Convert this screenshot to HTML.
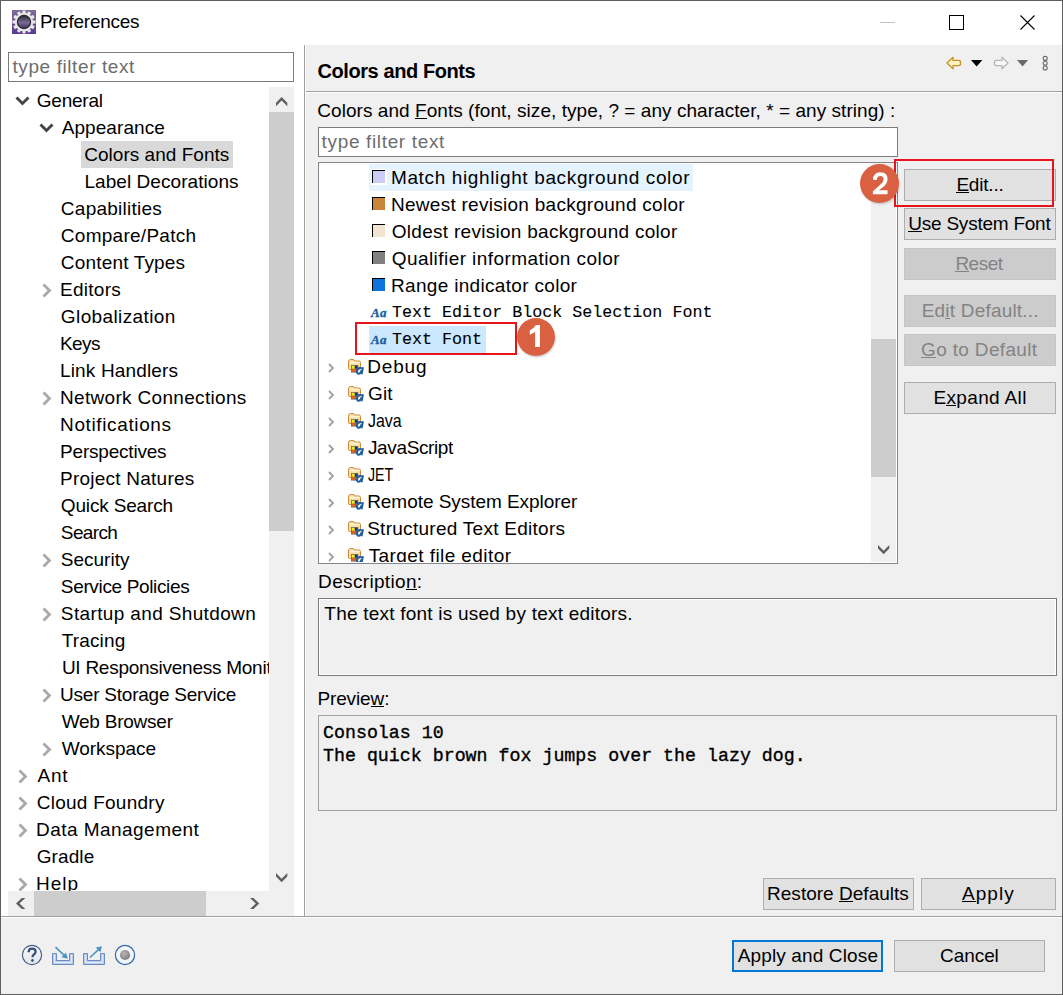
<!DOCTYPE html><html><head><meta charset="utf-8"><style>
*{margin:0;padding:0;box-sizing:border-box}
html,body{width:1063px;height:995px;overflow:hidden;background:#f0f0f0}
body{font-family:"Liberation Sans",sans-serif;font-size:18px;color:#000;position:relative}
.a{position:absolute;white-space:nowrap}
.btn{position:absolute;height:32px;background:#e1e1e1;border:1px solid #adadad}
.dis{background:#cccccc;border-color:#c4c4c4}
.g{color:#838383}
u{text-decoration:none;background:linear-gradient(currentColor,currentColor) no-repeat 0 18px/100% 1px}
.mono{font-family:"Liberation Mono",monospace}
svg{position:absolute;overflow:visible}
</style></head><body>
<div class="a" style="left:0;top:0;width:1063px;height:995px;border:1px solid #5f5f5f"></div>
<div class="a" style="left:1px;top:1px;width:1061px;height:44px;background:#fff"></div>
<svg style="left:12px;top:10px" width="24" height="24" viewBox="0 0 24 24">
<defs><linearGradient id="pg" x1="0" y1="0" x2="0" y2="1"><stop offset="0" stop-color="#7c6c9a"/><stop offset="1" stop-color="#5c3a94"/></linearGradient>
<linearGradient id="pc" x1="0" y1="0" x2="0" y2="1"><stop offset="0" stop-color="#2a2838"/><stop offset="0.55" stop-color="#7a6a98"/><stop offset="1" stop-color="#3a2c5a"/></linearGradient></defs>
<rect x="0" y="0" width="24" height="24" fill="url(#pg)"/>
<g fill="#e6e6e6" transform="translate(12 12)"><circle r="9.2"/><rect x="-1.6" y="-11.5" width="3.2" height="4" transform="rotate(0)"/><rect x="-1.6" y="-11.5" width="3.2" height="4" transform="rotate(30)"/><rect x="-1.6" y="-11.5" width="3.2" height="4" transform="rotate(60)"/><rect x="-1.6" y="-11.5" width="3.2" height="4" transform="rotate(90)"/><rect x="-1.6" y="-11.5" width="3.2" height="4" transform="rotate(120)"/><rect x="-1.6" y="-11.5" width="3.2" height="4" transform="rotate(150)"/><rect x="-1.6" y="-11.5" width="3.2" height="4" transform="rotate(180)"/><rect x="-1.6" y="-11.5" width="3.2" height="4" transform="rotate(210)"/><rect x="-1.6" y="-11.5" width="3.2" height="4" transform="rotate(240)"/><rect x="-1.6" y="-11.5" width="3.2" height="4" transform="rotate(270)"/><rect x="-1.6" y="-11.5" width="3.2" height="4" transform="rotate(300)"/><rect x="-1.6" y="-11.5" width="3.2" height="4" transform="rotate(330)"/></g>
<circle cx="12" cy="12" r="6.6" fill="url(#pc)" stroke="#262626" stroke-width="1.2"/></svg>
<div class="a" style="left:39.90px;top:8px;line-height:27px;letter-spacing:-0.290px;font-size:19px;">Preferences</div>
<div class="a" style="left:880px;top:22px;width:15px;height:1px;background:#c4c4c4"></div>
<div class="a" style="left:949px;top:15px;width:15px;height:15px;border:1px solid #000"></div>
<svg style="left:1020px;top:15px" width="15" height="15"><path d="M0.5 0.5L14.5 14.5M14.5 0.5L0.5 14.5" stroke="#000" stroke-width="1.1"/></svg>
<div class="a" style="left:1px;top:45px;width:303px;height:871px;background:#fff"></div>
<div class="a" style="left:8px;top:52px;width:286px;height:30px;border:1px solid #7a7a7a;background:#fff"></div>
<div class="a" style="left:12.50px;top:53px;line-height:28px;letter-spacing:0.587px;font-size:19px;color:#6d6d6d">type filter text</div>
<div class="a" style="left:0px;top:87px;width:269px;height:804px;overflow:hidden">
<svg style="left:15px;top:9px" width="15" height="10"><path d="M1.5 1.5L7.5 7.5L13.5 1.5" fill="none" stroke="#454545" stroke-width="2.85"/></svg>
<div class="a" style="left:36.76px;top:0px;line-height:27px;letter-spacing:-0.230px;font-size:19px;">General</div>
<svg style="left:39px;top:36px" width="15" height="10"><path d="M1.5 1.5L7.5 7.5L13.5 1.5" fill="none" stroke="#454545" stroke-width="2.85"/></svg>
<div class="a" style="left:61.66px;top:27px;line-height:27px;letter-spacing:0.076px;font-size:19px;">Appearance</div>
<div class="a" style="left:81px;top:54px;width:152px;height:27px;background:#d9d9d9"></div>
<div class="a" style="left:84.30px;top:54px;line-height:27px;letter-spacing:0.019px;font-size:19px;">Colors and Fonts</div>
<div class="a" style="left:84.40px;top:81px;line-height:27px;letter-spacing:0.066px;font-size:19px;">Label Decorations</div>
<div class="a" style="left:60.86px;top:108px;line-height:27px;letter-spacing:0.245px;font-size:19px;">Capabilities</div>
<div class="a" style="left:60.86px;top:135px;line-height:27px;letter-spacing:0.263px;font-size:19px;">Compare/Patch</div>
<div class="a" style="left:60.86px;top:162px;line-height:27px;letter-spacing:0.170px;font-size:19px;">Content Types</div>
<svg style="left:41.5px;top:196px" width="10" height="15"><path d="M1.5 1.5L7.5 7.5L1.5 13.5" fill="none" stroke="#a8a8a8" stroke-width="2.8"/></svg>
<div class="a" style="left:60.06px;top:189px;line-height:27px;letter-spacing:0.270px;font-size:19px;">Editors</div>
<div class="a" style="left:60.86px;top:216px;line-height:27px;letter-spacing:0.385px;font-size:19px;">Globalization</div>
<div class="a" style="left:60.06px;top:243px;line-height:27px;letter-spacing:-0.607px;font-size:19px;">Keys</div>
<div class="a" style="left:60.06px;top:270px;line-height:27px;letter-spacing:0.143px;font-size:19px;">Link Handlers</div>
<svg style="left:41.5px;top:304px" width="10" height="15"><path d="M1.5 1.5L7.5 7.5L1.5 13.5" fill="none" stroke="#a8a8a8" stroke-width="2.8"/></svg>
<div class="a" style="left:60.06px;top:297px;line-height:27px;letter-spacing:0.313px;font-size:19px;">Network Connections</div>
<div class="a" style="left:60.06px;top:324px;line-height:27px;letter-spacing:0.625px;font-size:19px;">Notifications</div>
<div class="a" style="left:60.06px;top:351px;line-height:27px;letter-spacing:-0.205px;font-size:19px;">Perspectives</div>
<div class="a" style="left:60.06px;top:378px;line-height:27px;letter-spacing:0.236px;font-size:19px;">Project Natures</div>
<div class="a" style="left:60.86px;top:405px;line-height:27px;letter-spacing:-0.167px;font-size:19px;">Quick Search</div>
<div class="a" style="left:60.86px;top:432px;line-height:27px;letter-spacing:-0.636px;font-size:19px;">Search</div>
<svg style="left:41.5px;top:466px" width="10" height="15"><path d="M1.5 1.5L7.5 7.5L1.5 13.5" fill="none" stroke="#a8a8a8" stroke-width="2.8"/></svg>
<div class="a" style="left:60.86px;top:459px;line-height:27px;letter-spacing:-0.011px;font-size:19px;">Security</div>
<div class="a" style="left:60.86px;top:486px;line-height:27px;letter-spacing:-0.353px;font-size:19px;">Service Policies</div>
<svg style="left:41.5px;top:520px" width="10" height="15"><path d="M1.5 1.5L7.5 7.5L1.5 13.5" fill="none" stroke="#a8a8a8" stroke-width="2.8"/></svg>
<div class="a" style="left:60.86px;top:513px;line-height:27px;letter-spacing:0.360px;font-size:19px;">Startup and Shutdown</div>
<div class="a" style="left:61.66px;top:540px;line-height:27px;letter-spacing:0.157px;font-size:19px;">Tracing</div>
<div class="a" style="left:61.90px;top:567px;line-height:27px;letter-spacing:-0.257px;font-size:19px;">UI Responsiveness Monitoring</div>
<svg style="left:41.5px;top:601px" width="10" height="15"><path d="M1.5 1.5L7.5 7.5L1.5 13.5" fill="none" stroke="#a8a8a8" stroke-width="2.8"/></svg>
<div class="a" style="left:60.06px;top:594px;line-height:27px;letter-spacing:-0.229px;font-size:19px;">User Storage Service</div>
<div class="a" style="left:61.66px;top:621px;line-height:27px;letter-spacing:-0.232px;font-size:19px;">Web Browser</div>
<svg style="left:41.5px;top:655px" width="10" height="15"><path d="M1.5 1.5L7.5 7.5L1.5 13.5" fill="none" stroke="#a8a8a8" stroke-width="2.8"/></svg>
<div class="a" style="left:61.66px;top:648px;line-height:27px;letter-spacing:-0.023px;font-size:19px;">Workspace</div>
<svg style="left:17.5px;top:682px" width="10" height="15"><path d="M1.5 1.5L7.5 7.5L1.5 13.5" fill="none" stroke="#a8a8a8" stroke-width="2.8"/></svg>
<div class="a" style="left:37.56px;top:675px;line-height:27px;letter-spacing:0.730px;font-size:19px;">Ant</div>
<svg style="left:17.5px;top:709px" width="10" height="15"><path d="M1.5 1.5L7.5 7.5L1.5 13.5" fill="none" stroke="#a8a8a8" stroke-width="2.8"/></svg>
<div class="a" style="left:36.76px;top:702px;line-height:27px;letter-spacing:0.252px;font-size:19px;">Cloud Foundry</div>
<svg style="left:17.5px;top:736px" width="10" height="15"><path d="M1.5 1.5L7.5 7.5L1.5 13.5" fill="none" stroke="#a8a8a8" stroke-width="2.8"/></svg>
<div class="a" style="left:35.96px;top:729px;line-height:27px;letter-spacing:0.464px;font-size:19px;">Data Management</div>
<div class="a" style="left:36.76px;top:756px;line-height:27px;letter-spacing:0.096px;font-size:19px;">Gradle</div>
<svg style="left:17.5px;top:790px" width="10" height="15"><path d="M1.5 1.5L7.5 7.5L1.5 13.5" fill="none" stroke="#a8a8a8" stroke-width="2.8"/></svg>
<div class="a" style="left:35.96px;top:783px;line-height:27px;letter-spacing:1.020px;font-size:19px;">Help</div>
<svg style="left:17.5px;top:817px" width="10" height="15"><path d="M1.5 1.5L7.5 7.5L1.5 13.5" fill="none" stroke="#a8a8a8" stroke-width="2.8"/></svg>
</div>
<div class="a" style="left:269px;top:87px;width:25px;height:804px;background:#f0f0f0"></div>
<div class="a" style="left:269px;top:112px;width:25px;height:419px;background:#cdcdcd"></div>
<svg style="left:275.8px;top:97px" width="12" height="10"><path d="M0 9.2L5.65 3.55L11.3 9.2V5.7L5.65 0L0 5.7Z" fill="#606060"/></svg>
<svg style="left:275.8px;top:872.8px" width="12" height="10"><path d="M0 0L5.65 5.65L11.3 0V3.5L5.65 9.2L0 3.5Z" fill="#606060"/></svg>
<div class="a" style="left:269px;top:891px;width:25px;height:25px;background:#f0f0f0"></div>
<div class="a" style="left:8px;top:891px;width:261px;height:25px;background:#f0f0f0"></div>
<div class="a" style="left:34px;top:891px;width:172px;height:25px;background:#cdcdcd"></div>
<svg style="left:16.1px;top:897.8px" width="10" height="12"><path d="M9.3 0H5.8L0 5.55L5.8 11.1H9.3L3.5 5.55Z" fill="#606060"/></svg>
<svg style="left:249.7px;top:897.9px" width="10" height="12"><path d="M0 0H3.5L9.3 5.55L3.5 11.1H0L5.8 5.55Z" fill="#606060"/></svg>
<div class="a" style="left:304px;top:45px;width:1px;height:871px;background:#a0a0a0"></div>
<div class="a" style="left:305px;top:45px;width:1px;height:871px;background:#fff"></div>
<div class="a" style="left:306px;top:91px;width:756px;height:1px;background:#a0a0a0"></div>
<div class="a" style="left:306px;top:92px;width:756px;height:1px;background:#fff"></div>
<div class="a" style="left:317.42px;top:58px;line-height:27px;letter-spacing:-0.412px;font-size:20px;font-weight:bold;">Colors and Fonts</div>
<svg style="left:946px;top:56px" width="16" height="14" viewBox="0 0 16 14"><path d="M1 7L7 1.2V4.4H12.8Q14.6 4.4 14.6 7Q14.6 9.6 12.8 9.6H7V12.8Z" fill="#fff2c4" stroke="#c8921e" stroke-width="1.3" stroke-linejoin="round"/></svg>
<svg style="left:971px;top:60px" width="11" height="7"><path d="M0 0H11.3L5.65 6.4Z" fill="#000"/></svg>
<svg style="left:992.5px;top:56px" width="16" height="14" viewBox="0 0 16 14"><path d="M15 7L9 1.2V4.4H3.2Q1.4 4.4 1.4 7Q1.4 9.6 3.2 9.6H9V12.8Z" fill="#f9f9f9" stroke="#b4b4b4" stroke-width="1.2" stroke-linejoin="round"/></svg>
<svg style="left:1017px;top:60px" width="11" height="7"><path d="M0 0H11.1L5.55 6.4Z" fill="#6a6a6a"/></svg>
<svg style="left:1042px;top:55px" width="7" height="17"><circle cx="3.2" cy="3.4" r="2" fill="none" stroke="#6a6a6a" stroke-width="1.1"/><circle cx="3.2" cy="8.2" r="2" fill="none" stroke="#6a6a6a" stroke-width="1.1"/><circle cx="3.2" cy="13" r="2" fill="none" stroke="#6a6a6a" stroke-width="1.1"/></svg>
<div class="a" style="left:317.30px;top:97px;line-height:27px;letter-spacing:0.049px;font-size:19px;">Colors and <u>F</u>onts (font, size, type, ? = any character, * = any string) :</div>
<div class="a" style="left:318px;top:127px;width:580px;height:30px;border:1px solid #7a7a7a;background:#fff"></div>
<div class="a" style="left:321.60px;top:128px;line-height:28px;letter-spacing:0.651px;font-size:19px;color:#6d6d6d">type filter text</div>
<div class="a" style="left:318px;top:162px;width:580px;height:402px;border:1px solid #828790;background:#fff"></div>
<div class="a" style="left:319px;top:163px;width:552px;height:399px;overflow:hidden">
<div class="a" style="left:50px;top:1px;width:324px;height:27px;background:#e5f3ff;"></div>
<div class="a" style="left:50px;top:163px;width:117px;height:27px;background:#cce8ff;"></div>
<div class="a" style="left:52px;top:6px;width:16px;height:16px;background:#fff;"></div>
<div class="a" style="left:53px;top:7px;width:13px;height:13px;background:#ccccf5;border-top:1px solid #000;border-left:1px solid #000"></div>
<div class="a" style="left:71.96px;top:1px;line-height:27px;letter-spacing:0.636px;font-size:19px;">Match highlight background color</div>
<div class="a" style="left:52px;top:33px;width:16px;height:16px;background:#fff;"></div>
<div class="a" style="left:53px;top:34px;width:13px;height:13px;background:#c9853a;border-top:1px solid #000;border-left:1px solid #000"></div>
<div class="a" style="left:71.96px;top:28px;line-height:27px;letter-spacing:0.275px;font-size:19px;">Newest revision background color</div>
<div class="a" style="left:52px;top:60px;width:16px;height:16px;background:#fff;"></div>
<div class="a" style="left:53px;top:61px;width:13px;height:13px;background:#f2e3d3;border-top:1px solid #000;border-left:1px solid #000"></div>
<div class="a" style="left:72.76px;top:55px;line-height:27px;letter-spacing:0.284px;font-size:19px;">Oldest revision background color</div>
<div class="a" style="left:52px;top:87px;width:16px;height:16px;background:#fff;"></div>
<div class="a" style="left:53px;top:88px;width:13px;height:13px;background:#808080;border-top:1px solid #000;border-left:1px solid #000"></div>
<div class="a" style="left:72.76px;top:82px;line-height:27px;letter-spacing:0.433px;font-size:19px;">Qualifier information color</div>
<div class="a" style="left:52px;top:114px;width:16px;height:16px;background:#fff;"></div>
<div class="a" style="left:53px;top:115px;width:13px;height:13px;background:#0a74dc;border-top:1px solid #000;border-left:1px solid #000"></div>
<div class="a" style="left:71.96px;top:109px;line-height:27px;letter-spacing:0.320px;font-size:19px;">Range indicator color</div>
<div class="a" style="left:52px;top:143px;font-family:'Liberation Serif',serif;font-style:italic;font-weight:bold;font-size:13px;color:#215c9c;line-height:14px;letter-spacing:0.3px;-webkit-text-stroke:0.35px #215c9c">Aa</div>
<div class="a mono" style="left:73px;top:136px;font-size:16.7px;line-height:27px;-webkit-text-stroke:0.1px #000">Text&nbsp;Editor&nbsp;Block&nbsp;Selection&nbsp;Font</div>
<div class="a" style="left:52px;top:170px;font-family:'Liberation Serif',serif;font-style:italic;font-weight:bold;font-size:13px;color:#215c9c;line-height:14px;letter-spacing:0.3px;-webkit-text-stroke:0.35px #215c9c">Aa</div>
<div class="a mono" style="left:73px;top:163px;font-size:16.7px;line-height:27px;-webkit-text-stroke:0.1px #000">Text&nbsp;Font</div>
<svg style="left:9px;top:199.5px" width="8" height="10"><path d="M1 1L5 5L1 9" fill="none" stroke="#a0a0a0" stroke-width="1.8"/></svg>
<svg style="left:29px;top:195px" width="16" height="17" viewBox="0 0 16 17">
<path d="M0.5 4Q0.5 1.5 2.5 1.5H5Q6.2 1.5 6.7 3H11Q12.5 3 12.5 4.5V10.5Q12.5 11.5 11.5 11.5H1.5Q0.5 11.5 0.5 10.5Z" fill="#f7dfa6" stroke="#cd8a36" stroke-width="1"/>
<path d="M1.5 4.5H11.5" stroke="#fff6dc" stroke-width="1.5"/>
<rect x="3" y="7" width="7.2" height="7.6" fill="#707070"/>
<rect x="3.8" y="7.8" width="2.9" height="2.9" fill="#f8f000"/><rect x="6.9" y="7.8" width="2.6" height="2.6" fill="#16309a"/>
<rect x="3.8" y="10.9" width="2.9" height="2.9" fill="#f0600a"/>
<path d="M13.8 10.6C13 9.5 9.8 9.3 9.1 12.6C8.6 15.1 9.7 15.9 10.7 15.8C11.9 15.7 13 14.4 13.6 12.2" fill="none" stroke="#1e5fa2" stroke-width="1.9"/><path d="M15 9.3L13.5 16.2" stroke="#1e5fa2" stroke-width="2"/>
</svg>
<div class="a" style="left:48.18px;top:190px;line-height:27px;letter-spacing:0.850px;font-size:19px;">Debug</div>
<svg style="left:9px;top:226.5px" width="8" height="10"><path d="M1 1L5 5L1 9" fill="none" stroke="#a0a0a0" stroke-width="1.8"/></svg>
<svg style="left:29px;top:222px" width="16" height="17" viewBox="0 0 16 17">
<path d="M0.5 4Q0.5 1.5 2.5 1.5H5Q6.2 1.5 6.7 3H11Q12.5 3 12.5 4.5V10.5Q12.5 11.5 11.5 11.5H1.5Q0.5 11.5 0.5 10.5Z" fill="#f7dfa6" stroke="#cd8a36" stroke-width="1"/>
<path d="M1.5 4.5H11.5" stroke="#fff6dc" stroke-width="1.5"/>
<rect x="3" y="7" width="7.2" height="7.6" fill="#707070"/>
<rect x="3.8" y="7.8" width="2.9" height="2.9" fill="#f8f000"/><rect x="6.9" y="7.8" width="2.6" height="2.6" fill="#16309a"/>
<rect x="3.8" y="10.9" width="2.9" height="2.9" fill="#f0600a"/>
<path d="M13.8 10.6C13 9.5 9.8 9.3 9.1 12.6C8.6 15.1 9.7 15.9 10.7 15.8C11.9 15.7 13 14.4 13.6 12.2" fill="none" stroke="#1e5fa2" stroke-width="1.9"/><path d="M15 9.3L13.5 16.2" stroke="#1e5fa2" stroke-width="2"/>
</svg>
<div class="a" style="left:48.98px;top:217px;line-height:27px;letter-spacing:0.190px;font-size:19px;">Git</div>
<svg style="left:9px;top:253.5px" width="8" height="10"><path d="M1 1L5 5L1 9" fill="none" stroke="#a0a0a0" stroke-width="1.8"/></svg>
<svg style="left:29px;top:249px" width="16" height="17" viewBox="0 0 16 17">
<path d="M0.5 4Q0.5 1.5 2.5 1.5H5Q6.2 1.5 6.7 3H11Q12.5 3 12.5 4.5V10.5Q12.5 11.5 11.5 11.5H1.5Q0.5 11.5 0.5 10.5Z" fill="#f7dfa6" stroke="#cd8a36" stroke-width="1"/>
<path d="M1.5 4.5H11.5" stroke="#fff6dc" stroke-width="1.5"/>
<rect x="3" y="7" width="7.2" height="7.6" fill="#707070"/>
<rect x="3.8" y="7.8" width="2.9" height="2.9" fill="#f8f000"/><rect x="6.9" y="7.8" width="2.6" height="2.6" fill="#16309a"/>
<rect x="3.8" y="10.9" width="2.9" height="2.9" fill="#f0600a"/>
<path d="M13.8 10.6C13 9.5 9.8 9.3 9.1 12.6C8.6 15.1 9.7 15.9 10.7 15.8C11.9 15.7 13 14.4 13.6 12.2" fill="none" stroke="#1e5fa2" stroke-width="1.9"/><path d="M15 9.3L13.5 16.2" stroke="#1e5fa2" stroke-width="2"/>
</svg>
<div class="a" style="left:49.20px;top:244px;line-height:27px;font-size:19px;transform:scaleX(0.8390);transform-origin:0 0">Java</div>
<svg style="left:9px;top:280.5px" width="8" height="10"><path d="M1 1L5 5L1 9" fill="none" stroke="#a0a0a0" stroke-width="1.8"/></svg>
<svg style="left:29px;top:276px" width="16" height="17" viewBox="0 0 16 17">
<path d="M0.5 4Q0.5 1.5 2.5 1.5H5Q6.2 1.5 6.7 3H11Q12.5 3 12.5 4.5V10.5Q12.5 11.5 11.5 11.5H1.5Q0.5 11.5 0.5 10.5Z" fill="#f7dfa6" stroke="#cd8a36" stroke-width="1"/>
<path d="M1.5 4.5H11.5" stroke="#fff6dc" stroke-width="1.5"/>
<rect x="3" y="7" width="7.2" height="7.6" fill="#707070"/>
<rect x="3.8" y="7.8" width="2.9" height="2.9" fill="#f8f000"/><rect x="6.9" y="7.8" width="2.6" height="2.6" fill="#16309a"/>
<rect x="3.8" y="10.9" width="2.9" height="2.9" fill="#f0600a"/>
<path d="M13.8 10.6C13 9.5 9.8 9.3 9.1 12.6C8.6 15.1 9.7 15.9 10.7 15.8C11.9 15.7 13 14.4 13.6 12.2" fill="none" stroke="#1e5fa2" stroke-width="1.9"/><path d="M15 9.3L13.5 16.2" stroke="#1e5fa2" stroke-width="2"/>
</svg>
<div class="a" style="left:48.98px;top:271px;line-height:27px;letter-spacing:-0.369px;font-size:19px;">JavaScript</div>
<svg style="left:9px;top:307.5px" width="8" height="10"><path d="M1 1L5 5L1 9" fill="none" stroke="#a0a0a0" stroke-width="1.8"/></svg>
<svg style="left:29px;top:303px" width="16" height="17" viewBox="0 0 16 17">
<path d="M0.5 4Q0.5 1.5 2.5 1.5H5Q6.2 1.5 6.7 3H11Q12.5 3 12.5 4.5V10.5Q12.5 11.5 11.5 11.5H1.5Q0.5 11.5 0.5 10.5Z" fill="#f7dfa6" stroke="#cd8a36" stroke-width="1"/>
<path d="M1.5 4.5H11.5" stroke="#fff6dc" stroke-width="1.5"/>
<rect x="3" y="7" width="7.2" height="7.6" fill="#707070"/>
<rect x="3.8" y="7.8" width="2.9" height="2.9" fill="#f8f000"/><rect x="6.9" y="7.8" width="2.6" height="2.6" fill="#16309a"/>
<rect x="3.8" y="10.9" width="2.9" height="2.9" fill="#f0600a"/>
<path d="M13.8 10.6C13 9.5 9.8 9.3 9.1 12.6C8.6 15.1 9.7 15.9 10.7 15.8C11.9 15.7 13 14.4 13.6 12.2" fill="none" stroke="#1e5fa2" stroke-width="1.9"/><path d="M15 9.3L13.5 16.2" stroke="#1e5fa2" stroke-width="2"/>
</svg>
<div class="a" style="left:49.20px;top:298px;line-height:27px;font-size:19px;transform:scaleX(0.7471);transform-origin:0 0">JET</div>
<svg style="left:9px;top:334.5px" width="8" height="10"><path d="M1 1L5 5L1 9" fill="none" stroke="#a0a0a0" stroke-width="1.8"/></svg>
<svg style="left:29px;top:330px" width="16" height="17" viewBox="0 0 16 17">
<path d="M0.5 4Q0.5 1.5 2.5 1.5H5Q6.2 1.5 6.7 3H11Q12.5 3 12.5 4.5V10.5Q12.5 11.5 11.5 11.5H1.5Q0.5 11.5 0.5 10.5Z" fill="#f7dfa6" stroke="#cd8a36" stroke-width="1"/>
<path d="M1.5 4.5H11.5" stroke="#fff6dc" stroke-width="1.5"/>
<rect x="3" y="7" width="7.2" height="7.6" fill="#707070"/>
<rect x="3.8" y="7.8" width="2.9" height="2.9" fill="#f8f000"/><rect x="6.9" y="7.8" width="2.6" height="2.6" fill="#16309a"/>
<rect x="3.8" y="10.9" width="2.9" height="2.9" fill="#f0600a"/>
<path d="M13.8 10.6C13 9.5 9.8 9.3 9.1 12.6C8.6 15.1 9.7 15.9 10.7 15.8C11.9 15.7 13 14.4 13.6 12.2" fill="none" stroke="#1e5fa2" stroke-width="1.9"/><path d="M15 9.3L13.5 16.2" stroke="#1e5fa2" stroke-width="2"/>
</svg>
<div class="a" style="left:48.18px;top:325px;line-height:27px;letter-spacing:-0.045px;font-size:19px;">Remote System Explorer</div>
<svg style="left:9px;top:361.5px" width="8" height="10"><path d="M1 1L5 5L1 9" fill="none" stroke="#a0a0a0" stroke-width="1.8"/></svg>
<svg style="left:29px;top:357px" width="16" height="17" viewBox="0 0 16 17">
<path d="M0.5 4Q0.5 1.5 2.5 1.5H5Q6.2 1.5 6.7 3H11Q12.5 3 12.5 4.5V10.5Q12.5 11.5 11.5 11.5H1.5Q0.5 11.5 0.5 10.5Z" fill="#f7dfa6" stroke="#cd8a36" stroke-width="1"/>
<path d="M1.5 4.5H11.5" stroke="#fff6dc" stroke-width="1.5"/>
<rect x="3" y="7" width="7.2" height="7.6" fill="#707070"/>
<rect x="3.8" y="7.8" width="2.9" height="2.9" fill="#f8f000"/><rect x="6.9" y="7.8" width="2.6" height="2.6" fill="#16309a"/>
<rect x="3.8" y="10.9" width="2.9" height="2.9" fill="#f0600a"/>
<path d="M13.8 10.6C13 9.5 9.8 9.3 9.1 12.6C8.6 15.1 9.7 15.9 10.7 15.8C11.9 15.7 13 14.4 13.6 12.2" fill="none" stroke="#1e5fa2" stroke-width="1.9"/><path d="M15 9.3L13.5 16.2" stroke="#1e5fa2" stroke-width="2"/>
</svg>
<div class="a" style="left:48.18px;top:352px;line-height:27px;letter-spacing:0.275px;font-size:19px;">Structured Text Editors</div>
<svg style="left:9px;top:388.5px" width="8" height="10"><path d="M1 1L5 5L1 9" fill="none" stroke="#a0a0a0" stroke-width="1.8"/></svg>
<svg style="left:29px;top:384px" width="16" height="17" viewBox="0 0 16 17">
<path d="M0.5 4Q0.5 1.5 2.5 1.5H5Q6.2 1.5 6.7 3H11Q12.5 3 12.5 4.5V10.5Q12.5 11.5 11.5 11.5H1.5Q0.5 11.5 0.5 10.5Z" fill="#f7dfa6" stroke="#cd8a36" stroke-width="1"/>
<path d="M1.5 4.5H11.5" stroke="#fff6dc" stroke-width="1.5"/>
<rect x="3" y="7" width="7.2" height="7.6" fill="#707070"/>
<rect x="3.8" y="7.8" width="2.9" height="2.9" fill="#f8f000"/><rect x="6.9" y="7.8" width="2.6" height="2.6" fill="#16309a"/>
<rect x="3.8" y="10.9" width="2.9" height="2.9" fill="#f0600a"/>
<path d="M13.8 10.6C13 9.5 9.8 9.3 9.1 12.6C8.6 15.1 9.7 15.9 10.7 15.8C11.9 15.7 13 14.4 13.6 12.2" fill="none" stroke="#1e5fa2" stroke-width="1.9"/><path d="M15 9.3L13.5 16.2" stroke="#1e5fa2" stroke-width="2"/>
</svg>
<div class="a" style="left:49.70px;top:379px;line-height:27px;letter-spacing:0.418px;font-size:19px;">Target file editor</div>
</div>
<div class="a" style="left:871px;top:163px;width:25px;height:399px;background:#f0f0f0"></div>
<div class="a" style="left:871px;top:339px;width:25px;height:138px;background:#cdcdcd"></div>
<svg style="left:877.9px;top:544.7px" width="12" height="10"><path d="M0 0L5.65 5.65L11.3 0V3.5L5.65 9.2L0 3.5Z" fill="#606060"/></svg>
<div class="a" style="left:355px;top:322px;width:162px;height:33px;border:2px solid #e8141c"></div>
<div class="a" style="left:516.95px;top:317.85px;width:38.3px;height:38.3px;border-radius:50%;background:#d96141;box-shadow:0.8px 1.6px 1.6px rgba(0,0,0,0.16)"></div>
<svg style="left:536.1px;top:337px" width="1" height="1"><path d="M0 -12H3.9V10H-0.9V-5.1L-6.2 -2.2V-6.4Q-2.5 -8.2 0 -12Z" fill="#fff"/></svg>
<div class="btn" style="left:904px;top:169px;width:152px;"></div>
<div class="a" style="left:956.40px;top:171px;line-height:27px;letter-spacing:-0.207px;font-size:19px;"><u>E</u>dit...</div>
<div class="btn" style="left:904px;top:208px;width:152px;"></div>
<div class="a" style="left:908.30px;top:210px;line-height:27px;letter-spacing:-0.236px;font-size:19px;"><u>U</u>se System Font</div>
<div class="btn dis" style="left:904px;top:248px;width:152px;"></div>
<div class="a" style="left:955.40px;top:250px;line-height:27px;letter-spacing:-0.510px;font-size:19px;color:#838383;"><u>R</u>eset</div>
<div class="btn dis" style="left:904px;top:295px;width:152px;"></div>
<div class="a" style="left:921.72px;top:297px;line-height:27px;letter-spacing:0.199px;font-size:19px;color:#838383;">Ed<u>i</u>t Default...</div>
<div class="btn dis" style="left:904px;top:334px;width:152px;"></div>
<div class="a" style="left:921.08px;top:336px;line-height:27px;letter-spacing:0.335px;font-size:19px;color:#838383;"><u>G</u>o to Default</div>
<div class="btn" style="left:904px;top:382px;width:152px;"></div>
<div class="a" style="left:933.40px;top:384px;line-height:27px;letter-spacing:0.356px;font-size:19px;">E<u>x</u>pand All</div>
<div class="a" style="left:894px;top:159px;width:160px;height:48px;border:2px solid #e8141c"></div>
<div class="a" style="left:860.35px;top:164.45px;width:39px;height:39px;border-radius:50%;background:#d96141;box-shadow:0.8px 1.6px 1.6px rgba(0,0,0,0.16)"></div>
<svg style="left:879.85px;top:183.95px" width="1" height="1"><path d="M-7.1 -4.2Q-6.8 -11.8 0.4 -11.8Q7.55 -11.8 7.55 -5Q7.55 -1 3.5 2.8L-1.2 6.2H7.55V10.2H-7.1V7.2L0.8 0.3Q3.6 -2.3 3.6 -4.9Q3.6 -7.9 0.4 -7.9Q-3.1 -7.9 -3.2 -3.9Z" fill="#fff"/></svg>
<div class="a" style="left:318.08px;top:568px;line-height:27px;letter-spacing:0.338px;font-size:19px;">Descriptio<u>n</u>:</div>
<div class="a" style="left:318px;top:598px;width:739px;height:78px;border:1px solid #7a7a7a;box-shadow:inset 1px 1px 0 #fff,inset -1px -1px 0 #fff;background:#f0f0f0"></div>
<div class="a" style="left:324.32px;top:600px;line-height:27px;letter-spacing:0.224px;font-size:19px;">The text font is used by text editors.</div>
<div class="a" style="left:317.40px;top:685px;line-height:27px;letter-spacing:-0.114px;font-size:19px;">Previe<u>w</u>:</div>
<div class="a" style="left:318px;top:715px;width:739px;height:96px;border:1px solid #a0a0a0;background:#f0f0f0"></div>
<div class="a mono" style="left:323px;top:721.5px;line-height:23px;font-size:18.3px;white-space:pre;-webkit-text-stroke:0.35px #000">Consolas 10
The quick brown fox jumps over the lazy dog.</div>
<div class="btn" style="left:763px;top:878px;width:151px;"></div>
<div class="a" style="left:767.06px;top:880px;line-height:27px;letter-spacing:0.017px;font-size:19px;">Restore <u>D</u>efaults</div>
<div class="btn" style="left:921px;top:878px;width:135px;"></div>
<div class="a" style="left:962.06px;top:880px;line-height:27px;letter-spacing:1.030px;font-size:19px;"><u>A</u>pply</div>
<div class="a" style="left:1px;top:916px;width:1061px;height:1px;background:#a0a0a0"></div>
<div class="a" style="left:1px;top:917px;width:1061px;height:1px;background:#fff"></div>
<svg style="left:21px;top:944px" width="22" height="22" viewBox="0 0 22 22"><defs><linearGradient id="hg" x1="0" y1="0" x2="0" y2="1"><stop offset="0" stop-color="#fafafa"/><stop offset="1" stop-color="#e2e4ea"/></linearGradient></defs><circle cx="11" cy="11" r="9.6" fill="url(#hg)" stroke="#3e5a86" stroke-width="1.1"/><path d="M7.6 8.2Q7.6 4.6 11.1 4.6Q14.6 4.6 14.6 7.7Q14.6 9.6 12.6 10.7Q11.6 11.3 11.6 13.2" fill="none" stroke="#34507e" stroke-width="2.3"/><circle cx="11.5" cy="16.4" r="1.35" fill="#34507e"/></svg>
<svg style="left:51.5px;top:946px" width="23" height="20" viewBox="0 0 23 20"><path d="M0.5 7.5V18.5H21.5V7.5H17.5V14.5H4.5V7.5Z" fill="#b9cbe8" stroke="#6a8cc4" stroke-width="1"/><path d="M2.5 9V16.5H19.5V9" fill="none" stroke="#e8eef8" stroke-width="1"/><path d="M3.5 1.2L13.5 10.6" stroke="#4a94c8" stroke-width="1.6"/><path d="M15.8 12.8L9.4 11.2L14 6.6Z" fill="#4a94c8"/></svg>
<svg style="left:82.6px;top:946px" width="23" height="20" viewBox="0 0 23 20"><path d="M0.5 7.5V18.5H21.5V7.5H17.5V14.5H4.5V7.5Z" fill="#b9cbe8" stroke="#6a8cc4" stroke-width="1"/><path d="M2.5 9V16.5H19.5V9" fill="none" stroke="#e8eef8" stroke-width="1"/><path d="M7 11.5L16.8 2.4" stroke="#4a94c8" stroke-width="1.6"/><path d="M19 0.2L12.8 1.6L17.4 6.2Z" fill="#4a94c8"/></svg>
<svg style="left:114px;top:944px" width="22" height="22" viewBox="0 0 22 22"><defs><radialGradient id="rg" cx="0.4" cy="0.35" r="0.7"><stop offset="0" stop-color="#b8b8b8"/><stop offset="1" stop-color="#7a7a7a"/></radialGradient></defs><circle cx="11" cy="11" r="9.6" fill="#f3f5f9" stroke="#2f68aa" stroke-width="1.2"/><circle cx="11" cy="11" r="5.1" fill="url(#rg)"/></svg>
<div class="btn" style="left:732px;top:940px;width:151px;border:2px solid #0078d7"></div>
<div class="a" style="left:737.70px;top:942px;line-height:27px;letter-spacing:0.136px;font-size:19px;">Apply and Close</div>
<div class="btn" style="left:894px;top:940px;width:151px;"></div>
<div class="a" style="left:940.08px;top:942px;line-height:27px;letter-spacing:-0.076px;font-size:19px;">Cancel</div>
</body></html>
